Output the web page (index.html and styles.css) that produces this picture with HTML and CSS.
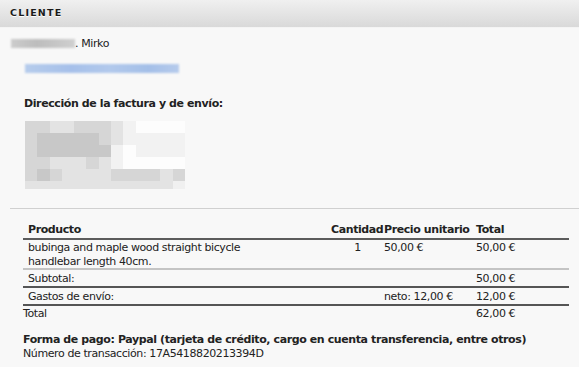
FILE: index.html
```html
<!DOCTYPE html>
<html lang="es">
<head>
<meta charset="utf-8">
<link rel="stylesheet" href="styles.css">
</head>
<body>
<div class="panel">
  <div class="panel-head">CLIENTE</div>
  <div class="panel-body">
    <div class="name"><span class="blur-name"></span>. Mirko</div>
    <div class="email"><span class="blur-email"></span></div>
    <div class="addr-title">Dirección de la factura y de envío:</div>
    <div class="addr">
      <i class="b"></i><i class="b"></i><i class="c"></i><i class="c"></i><i class="b"></i><i class="b"></i><i class="b"></i><i class="c"></i><i class="d"></i><i class="e"></i><i class="e"></i><i class="e"></i><i class="e"></i>
      <i class="b"></i><i class="a"></i><i class="a"></i><i class="a"></i><i class="a"></i><i class="a"></i><i class="b"></i><i class="c"></i><i class="d"></i><i class="d"></i><i class="d"></i><i class="d"></i><i class="d"></i>
      <i class="b"></i><i class="a"></i><i class="a"></i><i class="a"></i><i class="a"></i><i class="a"></i><i class="a"></i><i class="d"></i><i class="e"></i><i class="d"></i><i class="d"></i><i class="d"></i><i class="d"></i>
      <i class="b"></i><i class="b"></i><i class="c"></i><i class="c"></i><i class="c"></i><i class="b"></i><i class="c"></i><i class="d"></i><i class="e"></i><i class="e"></i><i class="e"></i><i class="e"></i><i class="e"></i>
      <i class="b"></i><i class="a"></i><i class="b"></i><i class="c"></i><i class="c"></i><i class="c"></i><i class="c"></i><i class="b"></i><i class="b"></i><i class="b"></i><i class="b"></i><i class="c"></i><i class="b"></i>
      <i class="c"></i><i class="c"></i><i class="c"></i><i class="c"></i><i class="c"></i><i class="c"></i><i class="c"></i><i class="c"></i><i class="c"></i><i class="c"></i><i class="c"></i><i class="c"></i><i class="f"></i>
    </div>
    <hr class="sep">
    <div class="order">
      <div class="row head">
        <div class="c-prod">Producto</div>
        <div class="c-qty">Cantidad</div>
        <div class="c-price">Precio unitario</div>
        <div class="c-total">Total</div>
      </div>
      <div class="row item">
        <div class="c-prod">bubinga and maple wood straight bicycle<br>handlebar length 40cm.</div>
        <div class="c-qty center">1</div>
        <div class="c-price">50,00 €</div>
        <div class="c-total">50,00 €</div>
      </div>
      <div class="row sub">
        <div class="c-prod">Subtotal:</div>
        <div class="c-qty"></div>
        <div class="c-price"></div>
        <div class="c-total">50,00 €</div>
      </div>
      <div class="row ship">
        <div class="c-prod">Gastos de envío:</div>
        <div class="c-qty"></div>
        <div class="c-price">neto: 12,00 €</div>
        <div class="c-total">12,00 €</div>
      </div>
      <div class="row grand">
        <div class="c-prod">Total</div>
        <div class="c-qty"></div>
        <div class="c-price"></div>
        <div class="c-total">62,00 €</div>
      </div>
    </div>
    <div class="payment">
      <div class="pay-method">Forma de pago: Paypal (tarjeta de crédito, cargo en cuenta transferencia, entre otros)</div>
      <div>Número de transacción: 17A5418820213394D</div>
    </div>
  </div>
</div>
</body>
</html>
```
FILE: styles.css
```css
* { box-sizing: border-box; }
html, body { margin: 0; padding: 0; }
body {
  background: #f8f8f8;
  font-family: "DejaVu Sans", Verdana, sans-serif;
  font-size: 11px;
  letter-spacing: -0.4px;
  color: #222;
  width: 579px;
  height: 367px;
  overflow: hidden;
}
.panel-head {
  height: 28px;
  padding: 7px 10px 0;
  background: linear-gradient(#f0f0f0, #d9d9d9);
  border-bottom: 1px solid #f4f4f4;
  font-size: 9.5px;
  font-weight: bold;
  letter-spacing: 1.2px;
  color: #1a1a1a;
  text-shadow: 0 1px 0 #fff;
  line-height: 12px;
}
.panel-body {
  padding: 9px 0 0 10px;
}
.name {
  line-height: 14px;
  height: 14px;
  padding-left: 1px;
}
.blur-name {
  display: inline-block;
  width: 64px;
  height: 9px;
  vertical-align: -1px;
  background: linear-gradient(90deg, #ccc, #bdbdbd 40%, #c6c6c6 70%, #d0d0d0);
  filter: blur(1px);
}
.email {
  height: 12px;
  margin-top: 13px;
  padding-left: 15px;
}
.blur-email {
  display: block;
  width: 154px;
  height: 9px;
  background: linear-gradient(90deg, #b6ccec, #a6c0ea 30%, #b2c9ec 55%, #a4bfe8 80%, #b6cbec);
  filter: blur(0.8px);
}
.addr-title {
  margin-top: 21px;
  padding-left: 14px;
  font-weight: bold;
  line-height: 14px;
}
.addr {
  margin: 10px 0 0 15px;
  width: 160px;
  display: grid;
  grid-template-columns: repeat(13, 12.3px);
  grid-template-rows: repeat(5, 12px) 8px;
  filter: blur(0.6px);
}
.addr i { display: block; }
.addr .a { background: #c8c8c8; }
.addr .b { background: #d6d6d6; }
.addr .c { background: #e3e3e3; }
.addr .d { background: #f2f2f2; }
.addr .e { background: #fdfdfd; }
.addr .f { background: #f0f0f0; }
.sep {
  margin: 19px 0 0;
  border: 0;
  border-top: 1px solid #d0d0d0;
  height: 0;
}
.order {
  margin: 14px 0 0 13px;
  width: 546px;
}
.row {
  display: grid;
  grid-template-columns: 308px 53px 92px 93px;
  line-height: 14px;
}
.c-prod { padding-left: 5px; }
.center { text-align: center; }
.head {
  font-weight: bold;
  padding-bottom: 1px;
  border-bottom: 2px solid #5c5c5c;
}
.head .c-qty { white-space: nowrap; }
.item {
  padding: 1px 0 0;
  height: 30px;
  border-bottom: 2px solid #c4c4c4;
}
.sub, .ship {
  padding-top: 2px;
  height: 18px;
  border-bottom: 2px solid #555;
}
.grand { padding-top: 1px; }
.grand .c-prod { padding-left: 0; }
.payment {
  margin-top: 12px;
  padding-left: 13px;
  line-height: 14px;
}
.pay-method { font-weight: bold; }
```
